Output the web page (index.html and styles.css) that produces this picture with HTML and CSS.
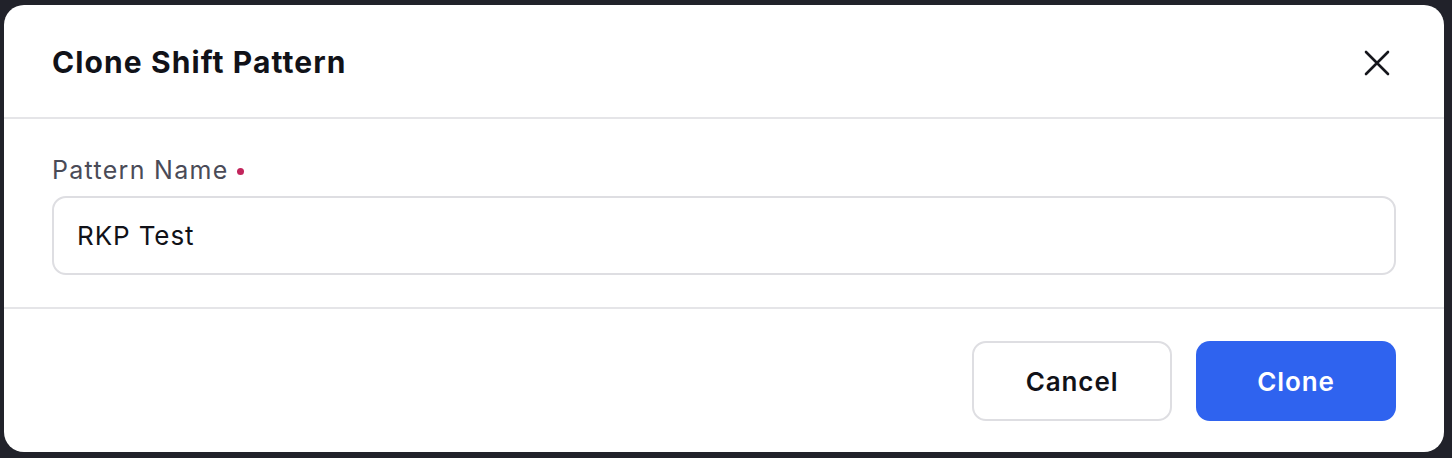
FILE: index.html
```html
<!DOCTYPE html>
<html lang="en">
<head>
<meta charset="utf-8">
<title>Clone Shift Pattern</title>
<link rel="stylesheet" href="styles.css">
</head>
<body>
<div class="modal">
  <div class="modal-header">
    <h2 class="modal-title">Clone Shift Pattern</h2>
    <button class="close-btn" aria-label="Close">
      <svg width="26" height="26" viewBox="0 0 26 26" fill="none" stroke="#15161c" stroke-width="2.6" stroke-linecap="round">
        <path d="M2 2 L24 24 M24 2 L2 24"/>
      </svg>
    </button>
  </div>
  <div class="modal-body">
    <label class="field-label">Pattern Name <span class="req"></span></label>
    <div class="input">RKP Test</div>
  </div>
  <div class="modal-footer">
    <button class="btn btn-secondary">Cancel</button>
    <button class="btn btn-primary">Clone</button>
  </div>
</div>
</body>
</html>
```

FILE: styles.css
```css
* { box-sizing: border-box; }
html, body { margin: 0; height: 100%; }
body {
  background: #21222a;
  font-family: Inter, "Noto Sans", sans-serif;
  padding: 5px 8px 6px 4px;
}
.modal {
  background: #ffffff;
  border-radius: 20px;
  width: 1440px;
  height: 447px;
  display: flex;
  flex-direction: column;
  overflow: hidden;
}
.modal-header {
  height: 114px;
  flex: none;
  display: flex;
  align-items: center;
  justify-content: space-between;
  padding: 2px 54px 0 48px;
  border-bottom: 2px solid #e5e5e8;
}
.modal-title {
  margin: 0;
  font-size: 30px;
  letter-spacing: 1.1px;
  font-weight: 700;
  color: #111218;
}
.close-btn {
  background: none;
  border: 0;
  padding: 0;
  width: 26px;
  height: 26px;
  display: flex;
  margin-top: 2px;
}
.modal-body {
  flex: none;
  height: 190px;
  padding: 35px 48px 0 48px;
  border-bottom: 2px solid #e5e5e8;
  display: flex;
  flex-direction: column;
}
.field-label {
  font-size: 25px;
  letter-spacing: 1.3px;
  line-height: 32px;
  color: #4a4b57;
  display: flex;
  align-items: center;
  gap: 8px;
}
.req {
  width: 7px;
  height: 7px;
  border-radius: 50%;
  background: #c2255c;
  margin-top: 2px;
}
.input {
  margin-top: 10px;
  height: 79px;
  border: 2px solid #dedee2;
  border-radius: 14px;
  padding: 0 23px;
  display: flex;
  align-items: center;
  font-size: 26px;
  letter-spacing: 0.9px;
  color: #111218;
}
.modal-footer {
  flex: 1;
  display: flex;
  justify-content: flex-end;
  align-items: flex-start;
  gap: 24px;
  padding: 32px 48px 0 48px;
}
.btn {
  width: 200px;
  height: 80px;
  border-radius: 14px;
  font-family: inherit;
  font-size: 26px;
  letter-spacing: 0.9px;
  font-weight: 600;
  cursor: pointer;
}
.btn-secondary {
  background: #ffffff;
  border: 2px solid #dedee2;
  color: #111218;
}
.btn-primary {
  background: #2f63ef;
  border: 0;
  color: #ffffff;
}
```
